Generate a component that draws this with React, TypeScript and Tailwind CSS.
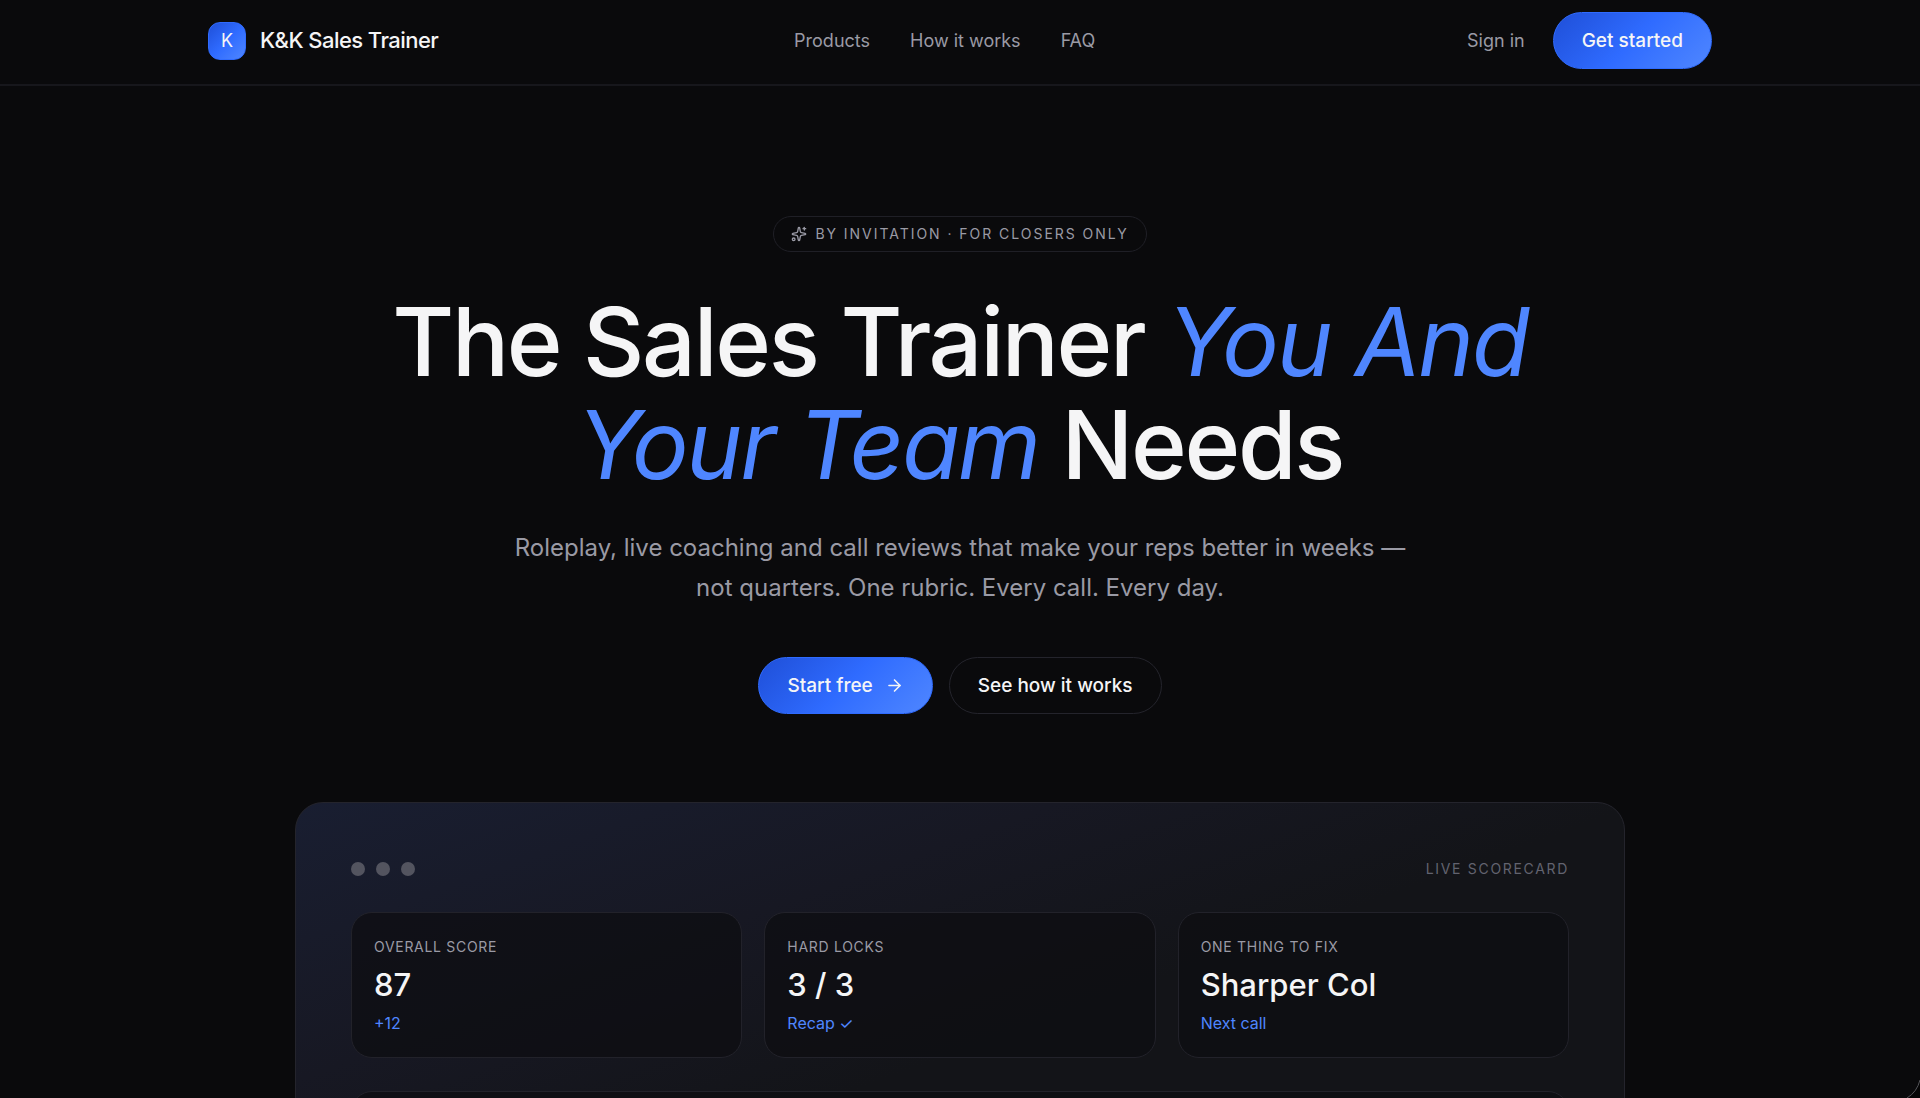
import type { ReactNode } from "react";
import { ArrowRight, Sparkles } from "lucide-react";

const NAV = [
  { label: "Products", href: "#products" },
  { label: "How it works", href: "#how" },
  { label: "FAQ", href: "#faq" },
];

const STATS = [
  { label: "Overall score", value: "87", note: "+12" },
  { label: "Hard locks", value: "3 / 3", note: "Recap ✓" },
  { label: "One thing to fix", value: "Sharper Col", note: "Next call" },
];

function PrimaryButton({ children }: { children: ReactNode }) {
  return (
    <button
      type="button"
      className="flex h-[57px] items-center gap-3 rounded-full border border-[#2f6bff] bg-linear-135 from-[#1f4fd8] via-[#2f6bff] to-[#4f86ff] px-7 text-[19px] leading-[29px] font-medium text-[#f5f5f6]"
    >
      {children}
    </button>
  );
}

function Header() {
  return (
    <header className="border-b-2 border-[#17171c] pb-[3px]">
      <div className="mx-auto flex h-[81px] max-w-[1504px] items-center justify-between">
        <a href="#top" className="flex items-center gap-3.5">
          <span className="flex size-[38px] items-center justify-center rounded-xl border border-[#2f6bff] bg-linear-135 from-[#1f4fd8] via-[#2f6bff] to-[#4f86ff] text-lg">
            K
          </span>
          <span className="text-[22px] font-medium tracking-tight">K&amp;K Sales Trainer</span>
        </a>
        <nav className="mr-4 flex items-center gap-10 text-lg text-[#9a9aa5]">
          {NAV.map((item) => (
            <a key={item.href} href={item.href}>{item.label}</a>
          ))}
        </nav>
        <div className="flex items-center gap-7">
          <a href="#signin" className="text-lg text-[#9a9aa5]">Sign in</a>
          <PrimaryButton>Get started</PrimaryButton>
        </div>
      </div>
    </header>
  );
}

function Hero() {
  return (
    <section className="flex flex-col items-center pt-[130px] text-center">
      <div className="flex h-9 items-center gap-2 rounded-full border border-[#1f1f26] px-[17px] text-sm tracking-[0.14em] text-[#9a9aa5] uppercase">
        <Sparkles size={16} />
        By invitation · For closers only
      </div>
      <h1 className="mt-[38px] max-w-[1200px] text-[95px] leading-[103px] font-medium tracking-tight">
        The Sales Trainer{" "}
        <em className="font-normal text-[#4f86ff]">You And Your Team</em> Needs
      </h1>
      <p className="mt-8 max-w-[900px] text-2xl leading-10 text-[#9a9aa5]">
        Roleplay, live coaching and call reviews that make your reps better in weeks — not
        quarters. One rubric. Every call. Every day.
      </p>
      <div className="mt-[49px] flex gap-4">
        <PrimaryButton>
          Start free
          <ArrowRight size={19} />
        </PrimaryButton>
        <button
          type="button"
          className="h-[57px] rounded-full border border-[#24242c] px-7 text-[19px] leading-[29px] font-medium"
        >
          See how it works
        </button>
      </div>
    </section>
  );
}

function Scorecard() {
  return (
    <section className="mx-auto mt-[88px] max-w-[1330px] rounded-[28px] border border-[#24242c] bg-[linear-gradient(160deg,#191e31_0%,#171823_26%,#131418_46%)] px-[55px] pt-14 pb-14">
      <div className="flex h-5 items-center justify-between">
        <div className="flex gap-[11px]">
          <span className="size-3.5 rounded-full bg-[#53545f]" />
          <span className="size-3.5 rounded-full bg-[#53545f]" />
          <span className="size-3.5 rounded-full bg-[#53545f]" />
        </div>
        <span className="text-sm tracking-[0.12em] text-[#62636f] uppercase">Live scorecard</span>
      </div>
      <div className="mt-[33px] grid grid-cols-3 gap-[22px]">
        {STATS.map((stat) => (
          <div
            key={stat.label}
            className="rounded-[21px] border border-[#22222a] bg-[#0d0d11]/75 px-[22px] py-5"
          >
            <div className="text-sm leading-7 tracking-wider text-[#9a9aa5] uppercase">{stat.label}</div>
            <div className="text-[31px] leading-[48px] font-medium">{stat.value}</div>
            <div className="text-base leading-7 text-[#4f86ff]">{stat.note}</div>
          </div>
        ))}
      </div>
      <div className="mt-[33px] h-60 rounded-[21px] border border-[#22222a] bg-[#0d0d11]/75" />
    </section>
  );
}

export default function App() {
  return (
    <div className="relative h-screen overflow-hidden bg-[#0a0a0c] font-[Inter,'Liberation_Sans',sans-serif] text-[#f5f5f6]">
      <Header />
      <main>
        <Hero />
        <Scorecard />
      </main>
      {/* window corner */}
      <svg className="absolute right-0 bottom-0" width="16" height="18" viewBox="0 0 16 18" fill="none">
        <path d="M16 0Q13 12 3 18H16Z" fill="#050506" />
        <path d="M16 0Q13 12 3 18" stroke="#55555a" />
      </svg>
    </div>
  );
}
